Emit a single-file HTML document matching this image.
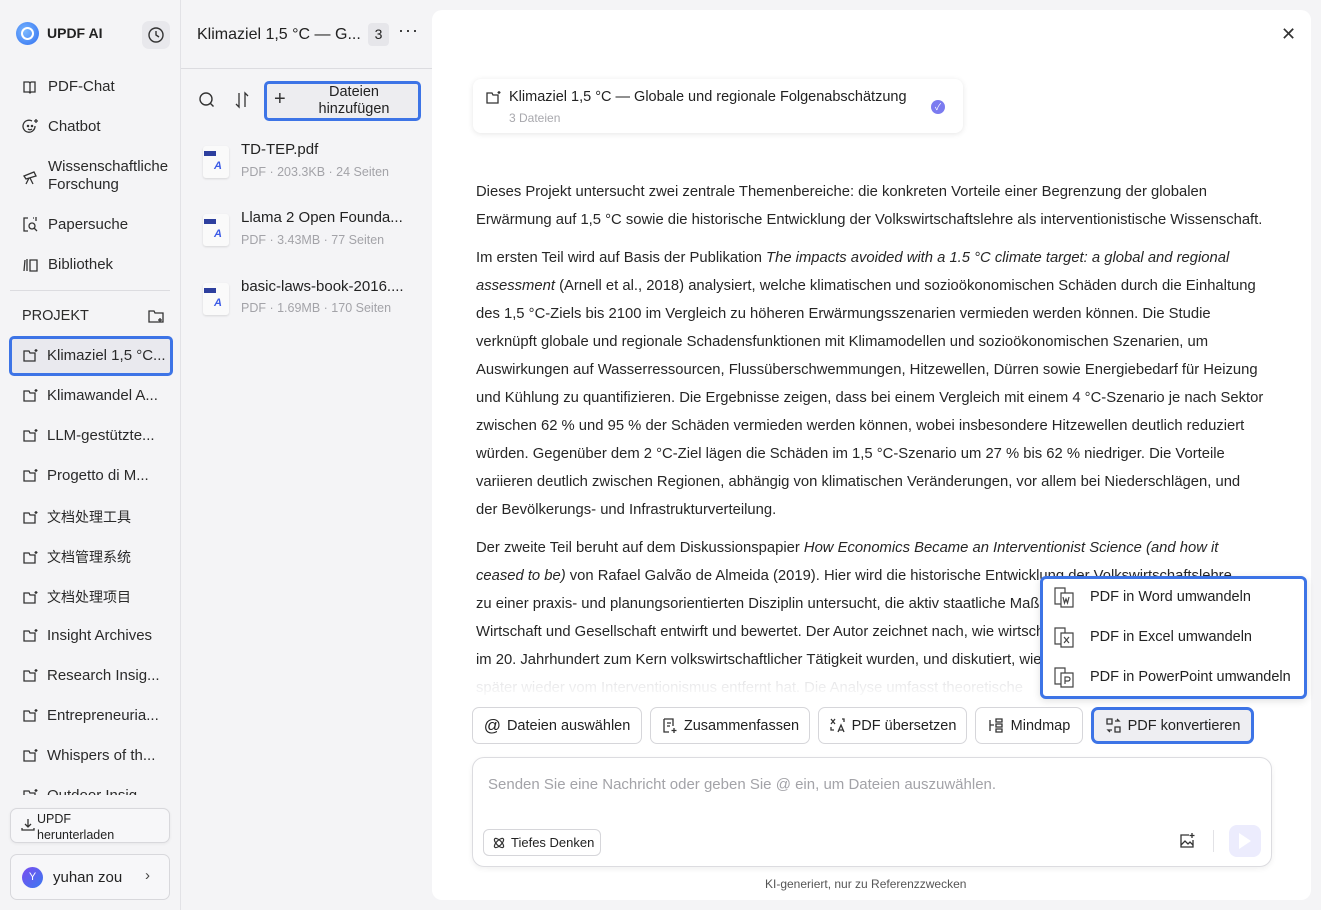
<!DOCTYPE html>
<html><head><meta charset="utf-8"><style>
*{box-sizing:border-box;margin:0;padding:0}
body{width:1321px;height:910px;overflow:hidden;background:#f4f4f6;font-family:"Liberation Sans","Noto Sans CJK SC",sans-serif;color:#222;position:relative}
.a{position:absolute}
.side{left:0;top:0;width:181px;height:910px;background:#f4f4f6;border-right:1px solid #e2e2e6}
.nav{left:22px;font-size:15px;color:#2a2a2a;display:flex;align-items:center;gap:9px}
.ic{width:17px;height:17px;flex:none}
.proj{left:22px;font-size:15px;color:#2a2a2a;display:flex;align-items:center;gap:8px;white-space:nowrap}
.txt{left:476px;font-size:14.8px;line-height:28px;color:#262626;white-space:nowrap}
.txt p{margin-bottom:10px}
.btn{top:707px;height:37px;border:1px solid #d6d6da;border-radius:7px;background:#fff;font-size:14.5px;display:flex;align-items:center;justify-content:center;padding:0 6px;gap:6px;color:#222;white-space:nowrap}
.btn svg{flex:none}
.mi{left:1052px;font-size:14.5px;display:flex;align-items:center;gap:12px;color:#222}
</style></head><body>
<div class="a side"></div>
<div class="a" style="left:16px;top:22px;width:23px;height:23px;border-radius:50%;background:radial-gradient(circle at 40% 40%,#7ab8ff,#2f6ef0)"></div>
<div class="a" style="left:21px;top:27px;width:13px;height:13px;border:2px solid #fff;border-radius:50%"></div>
<div class="a" style="left:47px;top:25px;font-size:14px;font-weight:bold">UPDF AI</div>
<div class="a" style="left:142px;top:21px;width:28px;height:28px;border-radius:7px;background:#e8e8ec"></div>
<svg class="a" style="left:147px;top:26px" width="18" height="18" viewBox="0 0 18 18" fill="none" stroke="#333" stroke-width="1.4"><circle cx="9" cy="9" r="7"/><path d="M9 5v4l3 2"/></svg>

<div class="a nav" style="top:78px"><svg class="ic" viewBox="0 0 17 17" fill="none" stroke="#333" stroke-width="1.3"><path d="M2 4h5l1 1 1-1h4v10H9l-1 1-1-1H2z"/><path d="M8 5v9"/></svg>PDF-Chat</div>
<div class="a nav" style="top:118px"><svg class="ic" viewBox="0 0 17 17" fill="none" stroke="#333" stroke-width="1.3"><path d="M13 8a6 6 0 1 1-3-5"/><circle cx="6" cy="8" r=".6"/><circle cx="10" cy="8" r=".6"/><path d="M6 11q2 1.5 4 0M14 1v4M12 3h4"/></svg>Chatbot</div>
<div class="a nav" style="top:158px;line-height:18px"><svg class="ic" viewBox="0 0 17 17" fill="none" stroke="#333" stroke-width="1.3"><path d="M2 8l10-4 2 4-10 3zM7 10l-3 6M8 10l3 6"/></svg>Wissenschaftliche<br>Forschung</div>
<div class="a nav" style="top:216px"><svg class="ic" viewBox="0 0 17 17" fill="none" stroke="#333" stroke-width="1.3"><path d="M6 2H2v13h4M11 2h1"/><circle cx="10" cy="10" r="3"/><path d="M12 12l3 3M14 1v4"/></svg>Papersuche</div>
<div class="a nav" style="top:256px"><svg class="ic" viewBox="0 0 17 17" fill="none" stroke="#333" stroke-width="1.3"><path d="M3 4l-1 11M5 3v12M8 4h7v11H8z"/></svg>Bibliothek</div>
<div class="a" style="left:10px;top:290px;width:160px;height:1px;background:#dcdce0"></div>
<div class="a" style="left:22px;top:308px;font-size:14.5px;color:#2a2a2a">PROJEKT</div>
<svg class="a" style="left:147px;top:307px" width="18" height="18" viewBox="0 0 18 18" fill="none" stroke="#333" stroke-width="1.3"><path d="M2 4h5l1 2h8v9H2zM13 11v4M11 13h4"/></svg>
<div class="a" style="left:9px;top:336px;width:164px;height:40px;border:3px solid #3d74e6;border-radius:5px;background:#e9e9ee"></div>
<div class="a proj" style="top:347px"><svg class="ic" viewBox="0 0 17 17" fill="none" stroke="#333" stroke-width="1.3"><path d="M2 4h5l1 2h5v8H2zM14 2v3M12.5 3.5h3"/></svg>Klimaziel 1,5 °C...</div>
<div class="a proj" style="top:387px"><svg class="ic" viewBox="0 0 17 17" fill="none" stroke="#333" stroke-width="1.3"><path d="M2 4h5l1 2h5v8H2zM14 2v3M12.5 3.5h3"/></svg>Klimawandel A...</div>
<div class="a proj" style="top:427px"><svg class="ic" viewBox="0 0 17 17" fill="none" stroke="#333" stroke-width="1.3"><path d="M2 4h5l1 2h5v8H2zM14 2v3M12.5 3.5h3"/></svg>LLM-gestützte...</div>
<div class="a proj" style="top:467px"><svg class="ic" viewBox="0 0 17 17" fill="none" stroke="#333" stroke-width="1.3"><path d="M2 4h5l1 2h5v8H2zM14 2v3M12.5 3.5h3"/></svg>Progetto di M...</div>
<div class="a proj" style="top:507px;font-size:14px"><svg class="ic" viewBox="0 0 17 17" fill="none" stroke="#333" stroke-width="1.3"><path d="M2 4h5l1 2h5v8H2zM14 2v3M12.5 3.5h3"/></svg>文档处理工具</div>
<div class="a proj" style="top:547px;font-size:14px"><svg class="ic" viewBox="0 0 17 17" fill="none" stroke="#333" stroke-width="1.3"><path d="M2 4h5l1 2h5v8H2zM14 2v3M12.5 3.5h3"/></svg>文档管理系统</div>
<div class="a proj" style="top:587px;font-size:14px"><svg class="ic" viewBox="0 0 17 17" fill="none" stroke="#333" stroke-width="1.3"><path d="M2 4h5l1 2h5v8H2zM14 2v3M12.5 3.5h3"/></svg>文档处理项目</div>
<div class="a proj" style="top:627px"><svg class="ic" viewBox="0 0 17 17" fill="none" stroke="#333" stroke-width="1.3"><path d="M2 4h5l1 2h5v8H2zM14 2v3M12.5 3.5h3"/></svg>Insight Archives</div>
<div class="a proj" style="top:667px"><svg class="ic" viewBox="0 0 17 17" fill="none" stroke="#333" stroke-width="1.3"><path d="M2 4h5l1 2h5v8H2zM14 2v3M12.5 3.5h3"/></svg>Research Insig...</div>
<div class="a proj" style="top:707px"><svg class="ic" viewBox="0 0 17 17" fill="none" stroke="#333" stroke-width="1.3"><path d="M2 4h5l1 2h5v8H2zM14 2v3M12.5 3.5h3"/></svg>Entrepreneuria...</div>
<div class="a proj" style="top:747px"><svg class="ic" viewBox="0 0 17 17" fill="none" stroke="#333" stroke-width="1.3"><path d="M2 4h5l1 2h5v8H2zM14 2v3M12.5 3.5h3"/></svg>Whispers of th...</div>
<div class="a" style="left:0;top:785px;width:180px;height:10px;overflow:hidden"><div class="proj a" style="top:2px"><svg class="ic" viewBox="0 0 17 17" fill="none" stroke="#333" stroke-width="1.3"><path d="M2 4h5l1 2h5v8H2zM14 2v3M12.5 3.5h3"/></svg>Outdoor Insig...</div></div>
<div class="a" style="left:10px;top:808px;width:160px;height:35px;border:1px solid #d8d8dc;border-radius:7px;background:#f7f7f9;box-shadow:0 1px 3px rgba(0,0,0,.06)"></div>
<svg class="a" style="left:20px;top:817px" width="16" height="16" viewBox="0 0 16 16" fill="none" stroke="#333" stroke-width="1.3"><path d="M8 2v8M5 7l3 3 3-3M2 11v2h12v-2"/></svg>
<div class="a" style="left:37px;top:811px;font-size:12.5px;line-height:16px">UPDF<br>herunterladen</div>
<div class="a" style="left:10px;top:854px;width:160px;height:46px;border:1px solid #d8d8dc;border-radius:7px;background:#f7f7f9"></div>
<div class="a" style="left:22px;top:867px;width:21px;height:21px;border-radius:50%;background:linear-gradient(135deg,#7b4cf0,#3a7af0);color:#fff;font-size:11px;text-align:center;line-height:21px">Y</div>
<div class="a" style="left:53px;top:869px;font-size:15px">yuhan zou</div>
<div class="a" style="left:145px;top:867px;font-size:15px;color:#444">›</div>

<div class="a" style="left:197px;top:26px;font-size:16px;color:#222;white-space:nowrap">Klimaziel 1,5 °C — G...</div>
<div class="a" style="left:368px;top:23px;width:21px;height:23px;border-radius:4px;background:#e6e6ea;font-size:14px;text-align:center;line-height:23px">3</div>
<div class="a" style="left:398px;top:20px;font-size:18px;letter-spacing:1px">···</div>
<div class="a" style="left:181px;top:68px;width:251px;height:1px;background:#dcdce0"></div>
<svg class="a" style="left:198px;top:91px" width="18" height="18" viewBox="0 0 18 18" fill="none" stroke="#333" stroke-width="1.4"><circle cx="8" cy="8" r="6"/><path d="M12.5 12.5l3 3"/></svg>
<svg class="a" style="left:234px;top:91px" width="16" height="18" viewBox="0 0 16 18" fill="none" stroke="#333" stroke-width="1.3"><path d="M5 2v14l-3-3M11 16V2l3 3"/></svg>
<div class="a" style="left:264px;top:81px;width:157px;height:40px;border:3px solid #3d74e6;border-radius:5px;background:#ededf0"></div>
<div class="a" style="left:274px;top:88px;font-size:20px;color:#333">+</div>
<div class="a" style="left:300px;top:84px;width:108px;text-align:center;font-size:14.5px;line-height:17px;color:#222">Dateien<br>hinzufügen</div>

<div class="a" style="left:203px;top:146px;width:26px;height:32px;background:#fafafa;border-radius:3px;box-shadow:0 1px 2px rgba(0,0,0,.12)"></div><div class="a" style="left:204px;top:151px;width:12px;height:5px;background:#2d3f9e"></div><div class="a" style="left:214px;top:160px;font-size:11px;font-weight:bold;color:#3d5ce6;font-style:italic">A</div>
<div class="a" style="left:241px;top:141px;font-size:15px">TD-TEP.pdf</div>
<div class="a" style="left:241px;top:165px;font-size:12.5px;color:#a3a3a8">PDF · 203.3KB · 24 Seiten</div>
<div class="a" style="left:203px;top:214px;width:26px;height:32px;background:#fafafa;border-radius:3px;box-shadow:0 1px 2px rgba(0,0,0,.12)"></div><div class="a" style="left:204px;top:219px;width:12px;height:5px;background:#2d3f9e"></div><div class="a" style="left:214px;top:228px;font-size:11px;font-weight:bold;color:#3d5ce6;font-style:italic">A</div>
<div class="a" style="left:241px;top:209px;font-size:15px">Llama 2 Open Founda...</div>
<div class="a" style="left:241px;top:233px;font-size:12.5px;color:#a3a3a8">PDF · 3.43MB · 77 Seiten</div>
<div class="a" style="left:203px;top:283px;width:26px;height:32px;background:#fafafa;border-radius:3px;box-shadow:0 1px 2px rgba(0,0,0,.12)"></div><div class="a" style="left:204px;top:288px;width:12px;height:5px;background:#2d3f9e"></div><div class="a" style="left:214px;top:297px;font-size:11px;font-weight:bold;color:#3d5ce6;font-style:italic">A</div>
<div class="a" style="left:241px;top:278px;font-size:15px">basic-laws-book-2016....</div>
<div class="a" style="left:241px;top:301px;font-size:12.5px;color:#a3a3a8">PDF · 1.69MB · 170 Seiten</div>

<div class="a" style="left:432px;top:10px;width:879px;height:890px;background:#fff;border-radius:10px"></div>
<div class="a" style="left:1281px;top:24px;font-size:18px;color:#333">✕</div>
<div class="a" style="left:473px;top:79px;width:490px;height:54px;border-radius:8px;background:#fff;box-shadow:0 1px 6px rgba(0,0,0,.1)"></div>
<svg class="a" style="left:485px;top:89px" width="17" height="17" viewBox="0 0 17 17" fill="none" stroke="#333" stroke-width="1.3"><path d="M2 4h5l1 2h5v8H2zM14 2v3M12.5 3.5h3"/></svg>
<div class="a" style="left:509px;top:89px;font-size:14.5px">Klimaziel 1,5 °C — Globale und regionale Folgenabschätzung</div>
<div class="a" style="left:509px;top:111px;font-size:12px;color:#a8a8ad">3 Dateien</div>
<div class="a" style="left:931px;top:100px;width:14px;height:14px;border-radius:50%;background:#7b7bf0;color:#fff;font-size:9px;text-align:center;line-height:14px">✓</div>

<div class="a txt" style="top:178px">
<p>Dieses Projekt untersucht zwei zentrale Themenbereiche: die konkreten Vorteile einer Begrenzung der globalen<br>Erwärmung auf 1,5 °C sowie die historische Entwicklung der Volkswirtschaftslehre als interventionistische Wissenschaft.</p>
<p>Im ersten Teil wird auf Basis der Publikation <i>The impacts avoided with a 1.5 °C climate target: a global and regional</i><br><i>assessment</i> (Arnell et al., 2018) analysiert, welche klimatischen und sozioökonomischen Schäden durch die Einhaltung<br>des 1,5 °C-Ziels bis 2100 im Vergleich zu höheren Erwärmungsszenarien vermieden werden können. Die Studie<br>verknüpft globale und regionale Schadensfunktionen mit Klimamodellen und sozioökonomischen Szenarien, um<br>Auswirkungen auf Wasserressourcen, Flussüberschwemmungen, Hitzewellen, Dürren sowie Energiebedarf für Heizung<br>und Kühlung zu quantifizieren. Die Ergebnisse zeigen, dass bei einem Vergleich mit einem 4 °C-Szenario je nach Sektor<br>zwischen 62 % und 95 % der Schäden vermieden werden können, wobei insbesondere Hitzewellen deutlich reduziert<br>würden. Gegenüber dem 2 °C-Ziel lägen die Schäden im 1,5 °C-Szenario um 27 % bis 62 % niedriger. Die Vorteile<br>variieren deutlich zwischen Regionen, abhängig von klimatischen Veränderungen, vor allem bei Niederschlägen, und<br>der Bevölkerungs- und Infrastrukturverteilung.</p>
<p>Der zweite Teil beruht auf dem Diskussionspapier <i>How Economics Became an Interventionist Science (and how it</i><br><i>ceased to be)</i> von Rafael Galvão de Almeida (2019). Hier wird die historische Entwicklung der Volkswirtschaftslehre<br>zu einer praxis- und planungsorientierten Disziplin untersucht, die aktiv staatliche Maßnahmen<br>Wirtschaft und Gesellschaft entwirft und bewertet. Der Autor zeichnet nach, wie wirtschaftliche<br>im 20. Jahrhundert zum Kern volkswirtschaftlicher Tätigkeit wurden, und diskutiert, wie<br><span style="color:#c8c8cc">später wieder vom Interventionismus entfernt hat. Die Analyse umfasst theoretische</span></p>
</div>
<div class="a" style="left:460px;top:676px;width:840px;height:24px;background:linear-gradient(rgba(255,255,255,.4),#fff)"></div>
<div class="a" style="left:460px;top:696px;width:840px;height:60px;background:#fff"></div>

<div class="a btn" style="left:472px;width:170px"><span style="font-size:17px">@</span>Dateien auswählen</div>
<div class="a btn" style="left:650px;width:160px"><svg width="17" height="17" viewBox="0 0 17 17" fill="none" stroke="#333" stroke-width="1.3"><path d="M3 2h9v7M3 2v13h5M6 6h4M6 9h3M13 11v5M10.5 13.5h5"/></svg>Zusammenfassen</div>
<div class="a btn" style="left:818px;width:149px"><svg width="17" height="17" viewBox="0 0 17 17" fill="none" stroke="#333" stroke-width="1.3"><path d="M2 2l4 5M6 2L2 7M9 15l3-7 3 7M10 13h4M2 10v3h3M13 2h2v3"/></svg>PDF übersetzen</div>
<div class="a btn" style="left:975px;width:108px"><svg width="17" height="17" viewBox="0 0 17 17" fill="none" stroke="#333" stroke-width="1.3"><path d="M2 3v11M2 8h4M8 2h6v3H8zM8 7h6v3H8zM8 12h6v3H8z"/></svg>Mindmap</div>
<div class="a btn" style="left:1091px;width:163px;border:3px solid #3d74e6;background:#eeeef2"><svg width="17" height="17" viewBox="0 0 17 17" fill="none" stroke="#333" stroke-width="1.3"><path d="M2 2h5v5H2zM10 10h5v5h-5zM10 4h4l-2-2M7 13H3l2 2"/></svg>PDF konvertieren</div>

<div class="a" style="left:1040px;top:576px;width:267px;height:123px;border:3px solid #3d74e6;border-radius:6px;background:#fff;box-shadow:0 2px 8px rgba(0,0,0,.12)"></div>
<div class="a mi" style="top:585px"><svg width="26" height="24" viewBox="0 0 26 24" fill="none" stroke="#444" stroke-width="1.2"><path d="M3 3h10v16H3z"/><path d="M9 8h12v14H9z" fill="#fff"/><path d="M11 12l1.5 6 1.5-4 1.5 4 1.5-6"/></svg>PDF in Word umwandeln</div>
<div class="a mi" style="top:625px"><svg width="26" height="24" viewBox="0 0 26 24" fill="none" stroke="#444" stroke-width="1.2"><path d="M3 3h10v16H3z"/><path d="M9 8h12v14H9z" fill="#fff"/><path d="M12 12l5 6M17 12l-5 6"/></svg>PDF in Excel umwandeln</div>
<div class="a mi" style="top:665px"><svg width="26" height="24" viewBox="0 0 26 24" fill="none" stroke="#444" stroke-width="1.2"><path d="M3 3h10v16H3z"/><path d="M9 8h12v14H9z" fill="#fff"/><path d="M13 19v-7h3a2 2 0 0 1 0 4h-3"/></svg>PDF in PowerPoint umwandeln</div>

<div class="a" style="left:472px;top:757px;width:800px;height:110px;border:1px solid #dcdce0;border-radius:12px;background:#fff;box-shadow:0 2px 6px rgba(0,0,0,.06)"></div>
<div class="a" style="left:488px;top:776px;font-size:15px;color:#a3a3a8">Senden Sie eine Nachricht oder geben Sie @ ein, um Dateien auszuwählen.</div>
<div class="a" style="left:483px;top:829px;width:118px;height:27px;border:1px solid #d6d6da;border-radius:6px;display:flex;align-items:center;gap:5px;padding-left:8px;font-size:13px;white-space:nowrap"><svg width="14" height="14" viewBox="0 0 14 14" fill="none" stroke="#333" stroke-width="1.2"><ellipse cx="7" cy="7" rx="6" ry="2.5" transform="rotate(45 7 7)"/><ellipse cx="7" cy="7" rx="6" ry="2.5" transform="rotate(-45 7 7)"/></svg>Tiefes Denken</div>
<svg class="a" style="left:1178px;top:832px" width="18" height="18" viewBox="0 0 18 18" fill="none" stroke="#333" stroke-width="1.3"><path d="M11 3H3v12h12V8"/><path d="M3 13l4-4 3 3 2-2 3 3M14 1v5M11.5 3.5h5"/></svg>
<div class="a" style="left:1213px;top:830px;width:1px;height:22px;background:#e2e2e6"></div>
<div class="a" style="left:1229px;top:825px;width:32px;height:32px;border-radius:8px;background:#ececfd"></div>
<div class="a" style="left:1239px;top:833px;width:0;height:0;border-left:12px solid #fff;border-top:8px solid transparent;border-bottom:8px solid transparent"></div>
<div class="a" style="left:765px;top:877px;font-size:12px;color:#555">KI-generiert, nur zu Referenzzwecken</div>
</body></html>
